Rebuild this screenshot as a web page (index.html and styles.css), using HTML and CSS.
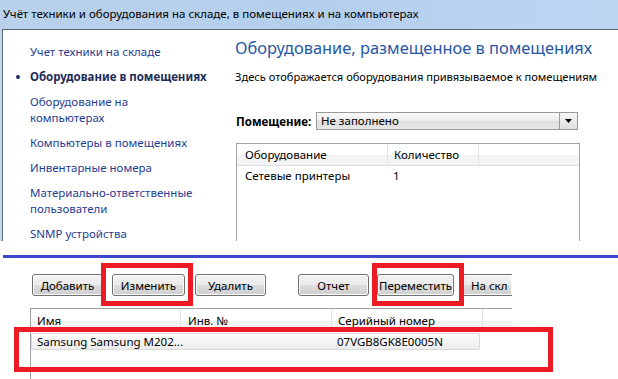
FILE: index.html
```html
<!DOCTYPE html>
<html lang="ru">
<head>
  <meta charset="UTF-8" />
  <title>Учёт техники и оборудования</title>
  <link rel="stylesheet" href="styles.css">
</head>
<body>

<div class="top-shot">
  <div class="titlebar">Учёт техники и оборудования на складе, в помещениях и на компьютерах</div>
  <div class="client">
    <nav class="nav">
      <a class="nav-item">Учет техники на складе</a>
      <a class="nav-item current">Оборудование в помещениях</a>
      <a class="nav-item">Оборудование на<br>компьютерах</a>
      <a class="nav-item">Компьютеры в помещениях</a>
      <a class="nav-item">Инвентарные номера</a>
      <a class="nav-item">Материально-ответственные<br>пользователи</a>
      <a class="nav-item">SNMP устройства</a>
    </nav>

    <section class="page">
      <h1>Оборудование, размещенное в помещениях</h1>
      <p class="lead">Здесь отображается оборудования привязываемое к помещениям</p>

      <div class="room-row">
        <label class="room-label">Помещение:</label>
        <div class="combo">
          <span class="combo-text">Не заполнено</span>
          <span class="combo-btn">
            <svg width="7" height="4" viewBox="0 0 7 4"><path d="M0 0h7L3.5 4z" fill="#000"/></svg>
          </span>
        </div>
      </div>

      <div class="listview">
        <div class="lv-head">
          <span class="lv-c1">Оборудование</span>
          <span class="lv-c2">Количество</span>
          <span class="lv-c3"></span>
        </div>
        <div class="lv-row">
          <span class="lv-c1">Сетевые принтеры</span>
          <span class="lv-c2">1</span>
        </div>
      </div>
    </section>
  </div>
</div>

<div class="divider"></div>

<div class="bottom-shot">
  <div class="toolbar">
    <button class="btn btn-add">Добавить</button>
    <button class="btn btn-edit">Изменить</button>
    <button class="btn btn-del">Удалить</button>
    <button class="btn btn-report">Отчет</button>
    <button class="btn btn-move">Переместить</button>
    <button class="btn btn-store">На скл</button>
  </div>

  <div class="grid">
    <div class="grid-head">
      <span class="g-c1">Имя</span>
      <span class="g-c2">Инв. №</span>
      <span class="g-c3">Серийный номер</span>
      <span class="g-c4"></span>
    </div>
    <div class="grid-row">
      <span class="g-c1">Samsung Samsung M202...</span>
      <span class="g-c2"></span>
      <span class="g-c3">07VGB8GK8E0005N</span>
    </div>
  </div>
</div>

<!-- red annotation frames -->
<div class="mark mark-edit"></div>
<div class="mark mark-move"></div>
<div class="mark mark-row"></div>

</body>
</html>
```

FILE: styles.css
```css
body {
  margin: 0;
  width: 618px;
  height: 379px;
  overflow: hidden;
  position: relative;
  background: #fff;
  font-family: 'Noto Sans', sans-serif;
  font-size: 11.5px;
  color: #000;
}

/* ---- upper screenshot: the window ---- */

.top-shot {
  height: 241px;
  overflow: hidden;
  background: #c3d6ea;
}

.titlebar {
  height: 29px;
  line-height: 28px;
  padding-left: 3px;
  background: linear-gradient(to right, #b9d1ea, #b4cfed 50%, #bcd6f2);
  white-space: nowrap;
}

.client {
  display: flex;
  margin-left: 2px;
  height: 220px;
  background: #fff;
  border-top: 1px solid #5d6670;
  border-left: 1px solid #5d6670;
}

.nav {
  flex: none;
  width: 205px;
  padding: 14px 0 0 27px;
  display: flex;
  flex-direction: column;
  gap: 9px;
}

.nav-item {
  line-height: 16px;
  color: #1f3c95;
  position: relative;
}

.nav-item.current {
  font-weight: bold;
  color: #1b2b58;
}

.nav-item.current::before {
  content: "";
  position: absolute;
  left: -14px;
  top: 6px;
  width: 4px;
  height: 4px;
  border-radius: 50%;
  background: #1b2b58;
}

.page {
  flex: 1;
  min-width: 0;
  padding-top: 8px;
}

.page h1 {
  margin: 0;
  font-size: 16.4px;
  line-height: 20px;
  font-weight: normal;
  color: #2657a6;
  white-space: nowrap;
}

.lead {
  margin: 11px 0 0;
  font-size: 11.1px;
  line-height: 16px;
  white-space: nowrap;
}

.room-row {
  display: flex;
  align-items: center;
  margin: 27px 0 0 1px;
  height: 18px;
}

.room-label {
  width: 80px;
  font-weight: bold;
}

.combo {
  display: flex;
  width: 262px;
  height: 18px;
  box-sizing: border-box;
  border: 1px solid #9a9a9a;
  background: linear-gradient(#fafafa, #ececec 50%, #dedede 51%, #e6e6e6);
}

.combo-text {
  flex: 1;
  padding-left: 4px;
  line-height: 16px;
}

.combo-btn {
  width: 17px;
  border-left: 1px solid #9a9a9a;
  display: flex;
  align-items: center;
  justify-content: center;
  background: linear-gradient(#f6f6f6, #e0e0e0);
}

.listview {
  margin: 13px 0 0 1px;
  width: 344px;
  height: 120px;
  box-sizing: border-box;
  border: 1px solid #a3a3a3;
}

.lv-head {
  display: flex;
  height: 21px;
  border-bottom: 1px solid #dcdfe3;
  background: linear-gradient(#fff, #fff 50%, #f3f4f6 51%, #f3f4f6);
}

.lv-head span {
  line-height: 21px;
}

.lv-head .lv-c2,
.lv-head .lv-c3 {
  border-left: 1px solid #e3e5e8;
}

.lv-c1 {
  width: 142px;
  padding-left: 8px;
}

.lv-c2 {
  width: 84px;
  padding-left: 6px;
}

.lv-c3 {
  width: 20px;
}

.lv-row {
  display: flex;
  line-height: 20px;
}

/* ---- separator drawn between the two shots ---- */

.divider {
  margin: 14px 0 0 3px;
  height: 3px;
  background: #3f48cc;
}

/* ---- lower screenshot: toolbar and grid ---- */

.bottom-shot {
  width: 512px;
  overflow: hidden;
  height: 121px;
}

.toolbar {
  display: flex;
  padding: 16px 0 0 32px;
  white-space: nowrap;
}

.btn {
  height: 22px;
  flex: none;
  padding: 0;
  font-family: inherit;
  font-size: 11.5px;
  color: #000;
  border: 1px solid #707070;
  border-radius: 3px;
  background: linear-gradient(#f2f2f2, #ebebeb 50%, #dddddd 51%, #cfcfcf);
  box-shadow: inset 0 0 0 1px #fcfcfc;
}

.btn-add { width: 71px; }
.btn-edit { width: 73px; margin-left: 9px; }
.btn-del { width: 71px; margin-left: 10px; }
.btn-report { width: 71px; margin-left: 32px; }
.btn-move { width: 77px; margin-left: 8px; }
.btn-store { width: 50px; margin-left: 8px; text-align: left; padding-left: 8px; border-right: 0; border-radius: 3px 0 0 3px; }

.grid {
  margin: 12px 0 0 30px;
  height: 80px;
  border-top: 1px solid #a0a0a0;
  border-left: 1px solid #a0a0a0;
}

.grid-head {
  display: flex;
  height: 23px;
  background: linear-gradient(#fff, #fff 50%, #f3f4f6 51%, #f1f2f4);
}

.grid-head span {
  line-height: 24px;
}

.grid-head .g-c2,
.grid-head .g-c3,
.grid-head .g-c4 {
  border-left: 1px solid #e2e4e7;
}

.g-c1 { width: 143px; padding-left: 6px; }
.g-c2 { width: 143px; padding-left: 7px; }
.g-c3 { width: 144px; padding-left: 6px; }
.g-c4 { flex: 1; }

.grid-row {
  display: flex;
  width: 449px;
  height: 17px;
  margin-top: 1px;
  box-sizing: border-box;
  border: 1px solid #d9d9d9;
  border-radius: 2px;
  background: linear-gradient(#fdfdfd, #ececec);
  white-space: nowrap;
}

.grid-row span {
  line-height: 15px;
  flex: none;
}

.grid-row .g-c1 { width: 143px; padding-left: 5px; }
.grid-row .g-c2 { width: 150px; padding-left: 0; }
.grid-row .g-c3 { width: 140px; padding-left: 7px; }

.mark {
  position: absolute;
  box-sizing: border-box;
  border: 5px solid #ed1c24;
}

.mark-edit { left: 101px; top: 263px; width: 92px; height: 43px; }
.mark-move { left: 372px; top: 263px; width: 92px; height: 43px; }
.mark-row { left: 14px; top: 327px; width: 539px; height: 45px; }
```
